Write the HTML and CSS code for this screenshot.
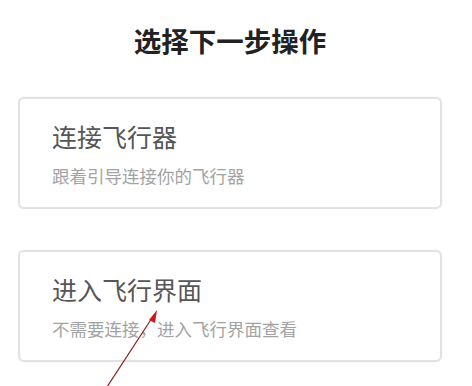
FILE: index.html
```html
<!DOCTYPE html>
<html lang="zh">
<head>
<meta charset="utf-8">
<link rel="stylesheet" href="styles.css">
</head>
<body>
<div class="page">
  <h1 class="heading">选择下一步操作</h1>
  <div class="card">
    <div class="card-title">连接飞行器</div>
    <div class="card-sub">跟着引导连接你的飞行器</div>
  </div>
  <div class="card">
    <div class="card-title">进入飞行界面</div>
    <div class="card-sub">不需要连接，进入飞行界面查看</div>
  </div>
  <svg class="arrow" width="472" height="386" viewBox="0 0 472 386">
    <line x1="105" y1="390" x2="152" y2="318" stroke="#8e1b1b" stroke-width="1.2"/>
    <polygon points="157,310 149,320 155,323" fill="#c81818"/>
  </svg>
</div>
</body>
</html>
```
FILE: styles.css
```css
html, body {
  margin: 0;
  padding: 0;
  background: #fff;
}
.page {
  position: relative;
  width: 472px;
  height: 386px;
  overflow: hidden;
  font-family: "Noto Sans CJK SC", "Noto Sans", sans-serif;
}
.heading {
  margin: 0;
  padding-top: 25px;
  font-size: 27.5px;
  line-height: 30px;
  font-weight: 700;
  color: #222;
  text-align: center;
  padding-right: 12px;
}
.card {
  margin: 42px 0 0 18px;
  border: 2px solid #e2e2e2;
  border-radius: 6px;
  box-shadow: 0 0 1px #d8d8d8;
  padding: 25px 0 0 32px;
  box-sizing: border-box;
  width: 424px;
  height: 112px;
}
.card + .card {
  margin-top: 41px;
}
.card-title {
  font-size: 25px;
  line-height: 25px;
  color: #565656;
}
.card-sub {
  margin-top: 18px;
  font-size: 17.5px;
  line-height: 18px;
  color: #a3a3a3;
}
.arrow {
  position: absolute;
  left: 0;
  top: 0;
}
```
